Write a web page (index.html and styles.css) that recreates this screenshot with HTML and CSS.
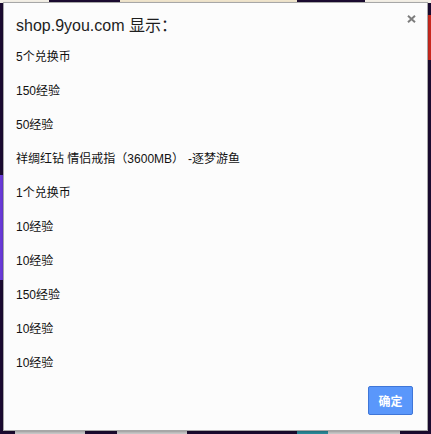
FILE: index.html
```html
<!DOCTYPE html>
<html lang="zh-CN">
<head>
<meta charset="utf-8">
<title>shop.9you.com</title>
<link rel="stylesheet" href="styles.css">
</head>
<body>
<div class="dialog">
  <button class="close" aria-label="关闭">
    <svg width="9" height="8" viewBox="0 0 9 8"><path d="M1 0.8 L8 7.2 M8 0.8 L1 7.2" stroke="#7d7d7d" stroke-width="2"/></svg>
  </button>
  <div class="title">shop.9you.com 显示<span class="fw">：</span></div>
  <div class="message">
    <div class="line">5个兑换币</div>
    <div class="line">150经验</div>
    <div class="line">50经验</div>
    <div class="line">祥绸红钻 情侣戒指<span class="fw">（</span>3600MB<span class="fw close-paren">）</span>-逐梦游鱼</div>
    <div class="line">1个兑换币</div>
    <div class="line">10经验</div>
    <div class="line">10经验</div>
    <div class="line">150经验</div>
    <div class="line">10经验</div>
    <div class="line">10经验</div>
  </div>
  <div class="footer">
    <button class="ok">确定</button>
  </div>
</div>
</body>
</html>
```

FILE: styles.css
```css
html, body {
  margin: 0;
  padding: 0;
  height: 100%;
}
body {
  background:
    linear-gradient(to right, #f3efe6 0 49px, #1b0b30 49px 120px, #efe4cc 120px 297px, #1b0b30 297px 365px, #f3efe6 365px) top / 100% 3px no-repeat,
    linear-gradient(to right, #1b0b30 0 15px, #c9c9c9 15px 85px, #1b0b30 85px 117px, #c9c9c9 117px 187px, #1b0b30 187px 297px, #2a8a9a 297px 328px, #c9c9c9 328px 400px, #1b0b30 400px) bottom / 100% 4px no-repeat,
    linear-gradient(#1b0b30 0 175px, #6a3ad8 175px 280px, #1b0b30 280px) left / 3px 100% no-repeat,
    linear-gradient(#1b0b30 0 15px, #c8281e 15px 60px, #1b0b30 60px) right / 3px 100% no-repeat,
    #1b0b30;
  font-family: "Liberation Sans", "Noto Sans CJK SC", sans-serif;
  overflow: hidden;
}
.dialog {
  position: relative;
  box-sizing: border-box;
  width: 425px;
  height: 429px;
  margin: 2px 0 0 3px;
  background: #fcfcfc;
  border: 1px solid #a7a7a7;
  box-shadow: 0 1px 2px rgba(0,0,0,0.25);
  display: flex;
  flex-direction: column;
  padding: 13px 14px 15px 12px;
}
.close {
  position: absolute;
  top: 10px;
  right: 9px;
  width: 13px;
  height: 12px;
  padding: 0;
  border: 0;
  background: transparent;
  display: flex;
  align-items: center;
  justify-content: center;
}
.title {
  height: 20px;
  font-size: 16px;
  line-height: 20px;
  color: #1e1e1e;
}
.fw {
  font-family: "Noto Sans CJK TC", sans-serif;
  line-height: 0;
}
.close-paren {
  margin-right: 4px;
}
.message {
  flex: 1;
  margin-top: 13px;
  display: flex;
  flex-direction: column;
  gap: 17px;
  font-size: 12px;
  line-height: 17px;
  color: #111;
}
.line {
  height: 17px;
}
.footer {
  display: flex;
  justify-content: flex-end;
}
.ok {
  box-sizing: border-box;
  width: 45px;
  height: 29px;
  padding: 0;
  background: #5a97fb;
  border: 1px solid #3f76d8;
  border-radius: 2px;
  color: #fff;
  font-family: "Noto Sans CJK SC", sans-serif;
  font-size: 12px;
  font-weight: bold;
}
```
